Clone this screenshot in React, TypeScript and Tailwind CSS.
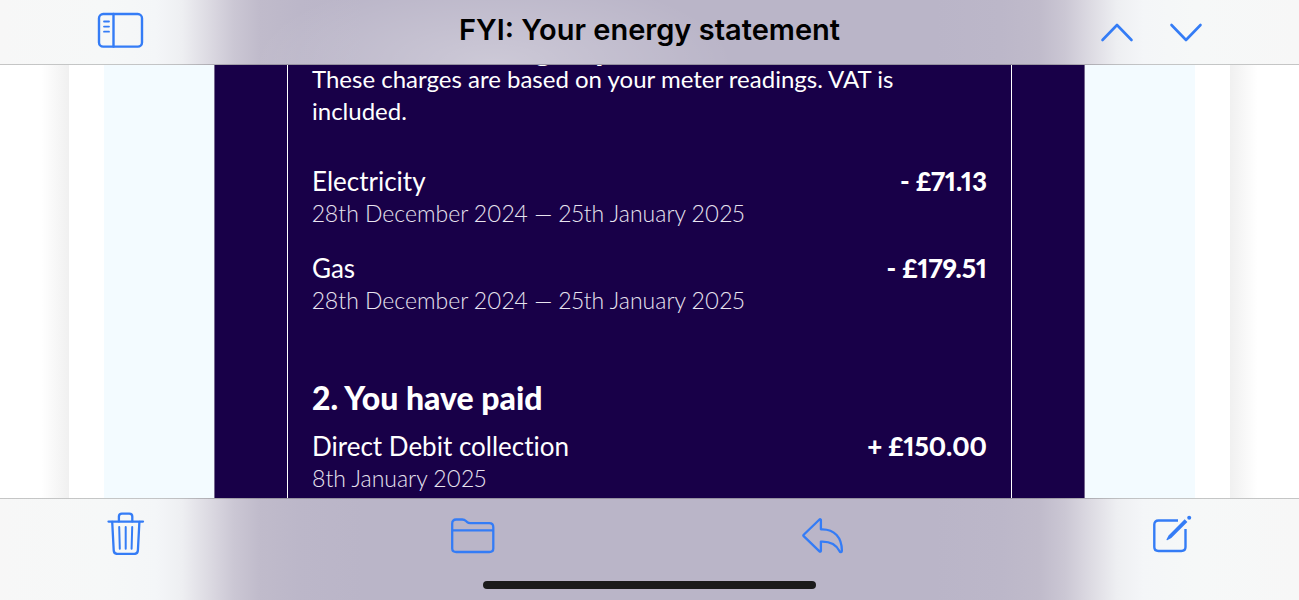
import type { ReactNode } from 'react';

interface Entry {
  title: string;
  dates: string;
  amount: string;
}

const charges: Entry[] = [
  { title: 'Electricity', dates: '28th December 2024 — 25th January 2025', amount: '- £71.13' },
  { title: 'Gas', dates: '28th December 2024 — 25th January 2025', amount: '- £179.51' },
];

const payments: Entry[] = [
  { title: 'Direct Debit collection', dates: '8th January 2025', amount: '+ £150.00' },
];

// Frosted bar tint, shared by the header and the toolbar
const barTint =
  'bg-[linear-gradient(to_right,#f7f7f7_0%,#f6f8f8_8%,#f4f6f8_12%,#eeeff2_14%,#dddbe3_16%,#cbc7d4_18%,#c0bbcb_20%,#bcb7c9_23%,#bab5c8_28%,#bab5c8_72%,#bcb7c9_77%,#c0bbcb_80%,#cbc7d4_82%,#dddbe3_84%,#eeeff2_86%,#f4f6f8_88%,#f6f8f8_92%,#f7f7f7_100%)]';

function IconButton({ label, children }: { label: string; children: ReactNode }) {
  return (
    <button type="button" aria-label={label} className="block text-[#347cf6]">
      {children}
    </button>
  );
}

function SidebarIcon() {
  return (
    <svg width="48" height="38" viewBox="0 0 48 38" fill="none" stroke="currentColor" strokeWidth="2.4" strokeLinecap="round">
      <rect x="3" y="2" width="43" height="32.600" rx="4.200" />
      <path d="M17.500 2v32.600" />
      <path d="M8 9.500h5M8 14.600h5M8 19.700h5" strokeWidth="1.800" />
    </svg>
  );
}

function ChevronIcon({ d }: { d: string }) {
  return (
    <svg width="34" height="20" viewBox="0 0 34 20" fill="none" stroke="currentColor" strokeWidth="2.600" strokeLinecap="round" strokeLinejoin="round">
      <path d={d} />
    </svg>
  );
}

function TrashIcon() {
  return (
    <svg width="38" height="44" viewBox="0 0 38 44" fill="none" stroke="currentColor" strokeWidth="2.300" strokeLinecap="round" strokeLinejoin="round">
      <path d="M1.500 10.600h34.500" />
      <path d="M11.900 10.400V5.600q0-3 3-3h7.400q3 0 3 3v4.800" />
      <path d="M5.200 10.800l1.500 28.600q.2 3.500 3.500 3.500h17.200q3.300 0 3.500-3.500l1.500-28.600" />
      <path d="M12.200 16l.6 21.800M18.700 16v21.800M25.200 16l-.6 21.800" strokeWidth="2" />
    </svg>
  );
}

function FolderIcon() {
  return (
    <svg width="46" height="38" viewBox="1 0 46 38" fill="none" stroke="currentColor" strokeWidth="2.300" strokeLinejoin="round">
      <path d="M2.200 31.500V6.500Q2.200 2.500 6.200 2.500h6q2.200 0 3.800 1.500l1.200 1.100q1.200 1.100 3 1.100h19.100q4 0 4 4v21.300q0 3.500-4 3.500H6.200q-4 0-4-3.500z" />
      <path d="M2.200 13.300h41.100" />
    </svg>
  );
}

function ReplyIcon() {
  return (
    <svg width="44" height="38" viewBox="1 0 44 38" fill="none" stroke="currentColor" strokeWidth="2.300" strokeLinejoin="round">
      <path d="M18.500 2.500c.5-.5 1.400-.2 1.400.6v9.200h1.400C33.300 12.300 40.900 20.300 40.900 33.800c0 1.600-1.700 1.900-2.300.5C35.600 28.100 30.300 24.600 21.300 24.600h-1.400v9.200c0 .8-.9 1.100-1.400.6L2.700 19.100c-.5-.5-.5-.9 0-1.400z" />
    </svg>
  );
}

function ComposeIcon() {
  return (
    <svg width="40" height="40" viewBox="0 0 40 40" fill="none" stroke="currentColor" strokeWidth="2.400">
      <path d="M26 5.500H6.500Q2.300 5.500 2.300 9.500V32q0 4 4.200 4h22.800q4.200 0 4.200-4V14" />
      <path d="M32.700 4.300l2.700 2.700L19.300 23.100l-4.100 2.100q-.9.100-.7-.8l2.100-4z" fill="currentColor" stroke="none" />
      <circle cx="37.200" cy="2.700" r="2" fill="currentColor" stroke="none" />
    </svg>
  );
}

function EntryRow({ entry }: { entry: Entry }) {
  return (
    <div className="flex items-start justify-between">
      <div>
        <div className="text-[26px] leading-8">{entry.title}</div>
        <div className="text-[23px] font-light leading-8 text-[#e8e4f0]">{entry.dates}</div>
      </div>
      <div className="text-[26px] font-black leading-8">{entry.amount}</div>
    </div>
  );
}

export default function App() {
  return (
    <div className="flex h-screen flex-col bg-white">
      <header className={`relative flex h-[65px] shrink-0 items-start justify-between border-b border-black/20 px-24 before:absolute before:inset-0 before:bg-[radial-gradient(ellipse_240px_90px_at_38%_100%,#ffffff45,#ffffff00)] ${barTint}`}>
        <div className="relative pt-3">
          <IconButton label="Show mailboxes"><SidebarIcon /></IconButton>
        </div>
        <h1 className="pointer-events-none absolute inset-x-0 top-3 text-center font-['Inter',sans-serif] text-[29px] leading-9 font-semibold text-black">
          FYI: Your energy statement
        </h1>
        <div className="relative flex gap-[35px] pt-[22px]">
          <IconButton label="Previous message"><ChevronIcon d="M2.500 18L17 3l14.500 15" /></IconButton>
          <IconButton label="Next message"><ChevronIcon d="M2.500 3L17 18 31.500 3" /></IconButton>
        </div>
      </header>

      {/* Message body, scrolled part of the way down */}
      <main className="flex min-h-0 flex-1">
        <div className="w-[69px] bg-linear-to-r from-white from-60% to-[#f0f0f0]" />
        <div className="flex min-w-0 flex-1 px-[35px]">
          <div className="flex min-w-0 flex-1 bg-[#f3fbff] px-[110px]">
            <div className="flex min-w-0 flex-1 border-x border-[#75678f] bg-[#180048] px-[72px]">
              <div className="flex min-w-0 flex-1 flex-col justify-end overflow-hidden border-x border-white px-6 pb-1 font-['Lato','Open_Sans',sans-serif] text-white proportional-nums [font-variant-ligatures:none]">
                <h2 className="-mb-1 text-[32px] font-black leading-9">1. We have charged you</h2>
                <p className="mb-[38px] text-2xl leading-8">
                  These charges are based on your meter readings. VAT is included.
                </p>
                <div className="flex flex-col gap-[23px]">
                  {charges.map(entry => <EntryRow key={entry.title} entry={entry} />)}
                </div>
                <h2 className="mt-16 mb-[14px] text-[32px] font-black leading-9">2. You have paid</h2>
                {payments.map(entry => <EntryRow key={entry.title} entry={entry} />)}
              </div>
            </div>
          </div>
        </div>
        <div className="w-[69px] bg-linear-to-l from-white from-60% to-[#f0f0f0]" />
      </main>

      <footer className={`flex h-[102px] shrink-0 flex-col justify-between border-t border-black/20 pb-[11px] ${barTint}`}>
        <div className="flex items-end justify-between px-[107px] pt-3">
          <IconButton label="Delete"><TrashIcon /></IconButton>
          <IconButton label="Move to folder"><FolderIcon /></IconButton>
          <IconButton label="Reply"><ReplyIcon /></IconButton>
          <IconButton label="Compose"><ComposeIcon /></IconButton>
        </div>
        <div className="mx-auto h-2 w-[333px] rounded-full bg-[#1b1b1b]" />
      </footer>
    </div>
  );
}
